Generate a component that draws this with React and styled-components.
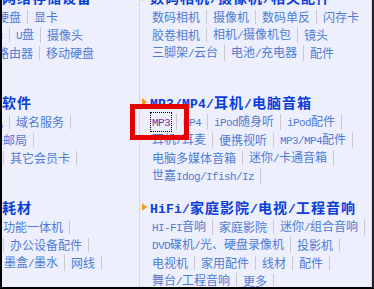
import React from 'react';
import styled, { createGlobalStyle } from 'styled-components';

const Global = createGlobalStyle`
  html, body { margin: 0; padding: 0; background: #edf0fc; }
`;

const Frame = styled.div`
  position: relative;
  width: 374px;
  height: 289px;
  overflow: hidden;
  background: #edf0fc;
  font-family: "Noto Sans CJK SC", sans-serif;

  &::after {
    content: '';
    position: absolute;
    inset: 0;
    border-left: 2px solid #000;
    border-bottom: 2px solid #000;
    border-right: 2px solid #222;
    pointer-events: none;
  }
`;

const Columns = styled.div`
  display: grid;
  grid-template-columns: 216px 233px;
  margin-left: -77px;
  margin-top: -14px;
`;

const Column = styled.div`
  display: flex;
  flex-direction: column;
  border-left: 1px dotted #bcc4dc;
  border-right: ${p => (p.$last ? '1px dotted #c8cee2' : 'none')};
`;

const Block = styled.div`
  height: 105px;
  display: flex;
  flex-direction: column;
`;

const Heading = styled.div`
  display: flex;
  align-items: center;
  height: 22px;
  padding-left: 2px;
  font-weight: bold;
  font-size: 14px;
  letter-spacing: 1px;
  color: #0b3ed8;
  white-space: nowrap;

  &::before {
    content: '';
    width: 0;
    height: 0;
    border-left: 5px solid #f59a1c;
    border-top: 4px solid transparent;
    border-bottom: 4px solid transparent;
    margin-right: 3px;
  }
`;

const Row = styled.div`
  display: flex;
  align-items: center;
  height: 18px;
  padding-left: 6px;
  white-space: nowrap;
  &:first-of-type { margin-top: 1px; }
`;

const Item = styled.span`
  line-height: 14px;
  padding: 0 6px;
  font-size: 12px;
  color: #4f7bd6;
  border-right: ${p => (p.$sep ? '1px solid #c9c9cf' : '1px solid transparent')};
`;

const Link = styled.span`
  display: inline-block;
  line-height: 13px;
  color: ${p => (p.$visited ? '#8e2a9c' : 'inherit')};
  outline: ${p => (p.$focused ? '1px dotted #000' : 'none')};
  outline-offset: 1px;
`;

const Latin = styled.span`
  font-family: "Liberation Mono", monospace;
  font-size: ${p => (p.$head ? '13px' : '11px')};
  letter-spacing: ${p => (p.$head ? '0.2px' : '-0.6px')};
`;

const RedMark = styled.div`
  position: absolute;
  left: 130px;
  top: 104px;
  width: 59px;
  height: 36px;
  box-sizing: border-box;
  border: 5px solid #e60000;
`;

const Mixed = ({ text, head }) =>
  text
    .split(/([\x00-\x7f]+)/)
    .filter(Boolean)
    .map((part, i) =>
      /^[\x00-\x7f]+$/.test(part) ? (
        <Latin key={i} $head={head}>
          {part}
        </Latin>
      ) : (
        part
      )
    );

const left = [
  {
    title: '电脑外设/网络存储设备',
    rows: [
      ['主板', '固态硬盘', '显卡'],
      ['CPU', '散热器', 'U盘', '摄像头'],
      ['网卡', '无线路由器', '移动硬盘'],
    ],
  },
  {
    title: '网游点卡/软件',
    trailing: true,
    rows: [
      ['VPS', '云主机', '域名服务'],
      ['Email', '电子邮局'],
      ['点卡', '话费', '其它会员卡'],
    ],
  },
  {
    title: '办公设备/耗材',
    trailing: true,
    rows: [
      ['UPS电源', '多功能一体机'],
      ['纸张', '色带', '办公设备配件'],
      ['硒鼓', 'DVD', '墨盒/墨水', '网线'],
    ],
  },
];

const right = [
  {
    title: '数码相机/摄像机/相关配件',
    rows: [
      ['数码相机', '摄像机', '数码单反', '闪存卡'],
      ['胶卷相机', '相机/摄像机包', '镜头'],
      ['三脚架/云台', '电池/充电器', '配件'],
    ],
  },
  {
    title: 'MP3/MP4/耳机/电脑音箱',
    trailing: true,
    rows: [
      ['MP3', 'MP4', 'iPod随身听', 'iPod配件'],
      ['耳机/耳麦', '便携视听', 'MP3/MP4配件'],
      ['电脑多媒体音箱', '迷你/卡通音箱'],
      ['世嘉Idog/Ifish/Iz'],
    ],
  },
  {
    title: 'HiFi/家庭影院/电视/工程音响',
    trailing: true,
    rows: [
      ['HI-FI音响', '家庭影院', '迷你/组合音响'],
      ['DVD碟机/光、硬盘录像机', '投影机'],
      ['电视机', '家用配件', '线材', '配件'],
      ['舞台/工程音响', '更多'],
    ],
  },
];

const Section = ({ block, active }) => (
  <Block>
    <Heading>
      <span>
        <Mixed text={block.title} head />
      </span>
    </Heading>
    {block.rows.map((row, r) => (
      <Row key={r}>
        {row.map((label, i) => {
          const isActive = active && active === label && r === 0 && i === 0;
          return (
            <Item key={i} $sep={block.trailing || i < row.length - 1}>
              <Link $visited={isActive} $focused={isActive}>
                <Mixed text={label} />
              </Link>
            </Item>
          );
        })}
      </Row>
    ))}
  </Block>
);

export default function App() {
  return (
    <Frame>
      <Global />
      <Columns>
        <Column>
          {left.map((b, i) => (
            <Section key={i} block={b} />
          ))}
        </Column>
        <Column $last>
          {right.map((b, i) => (
            <Section key={i} block={b} active={i === 1 ? 'MP3' : null} />
          ))}
        </Column>
      </Columns>
      <RedMark />
    </Frame>
  );
}
